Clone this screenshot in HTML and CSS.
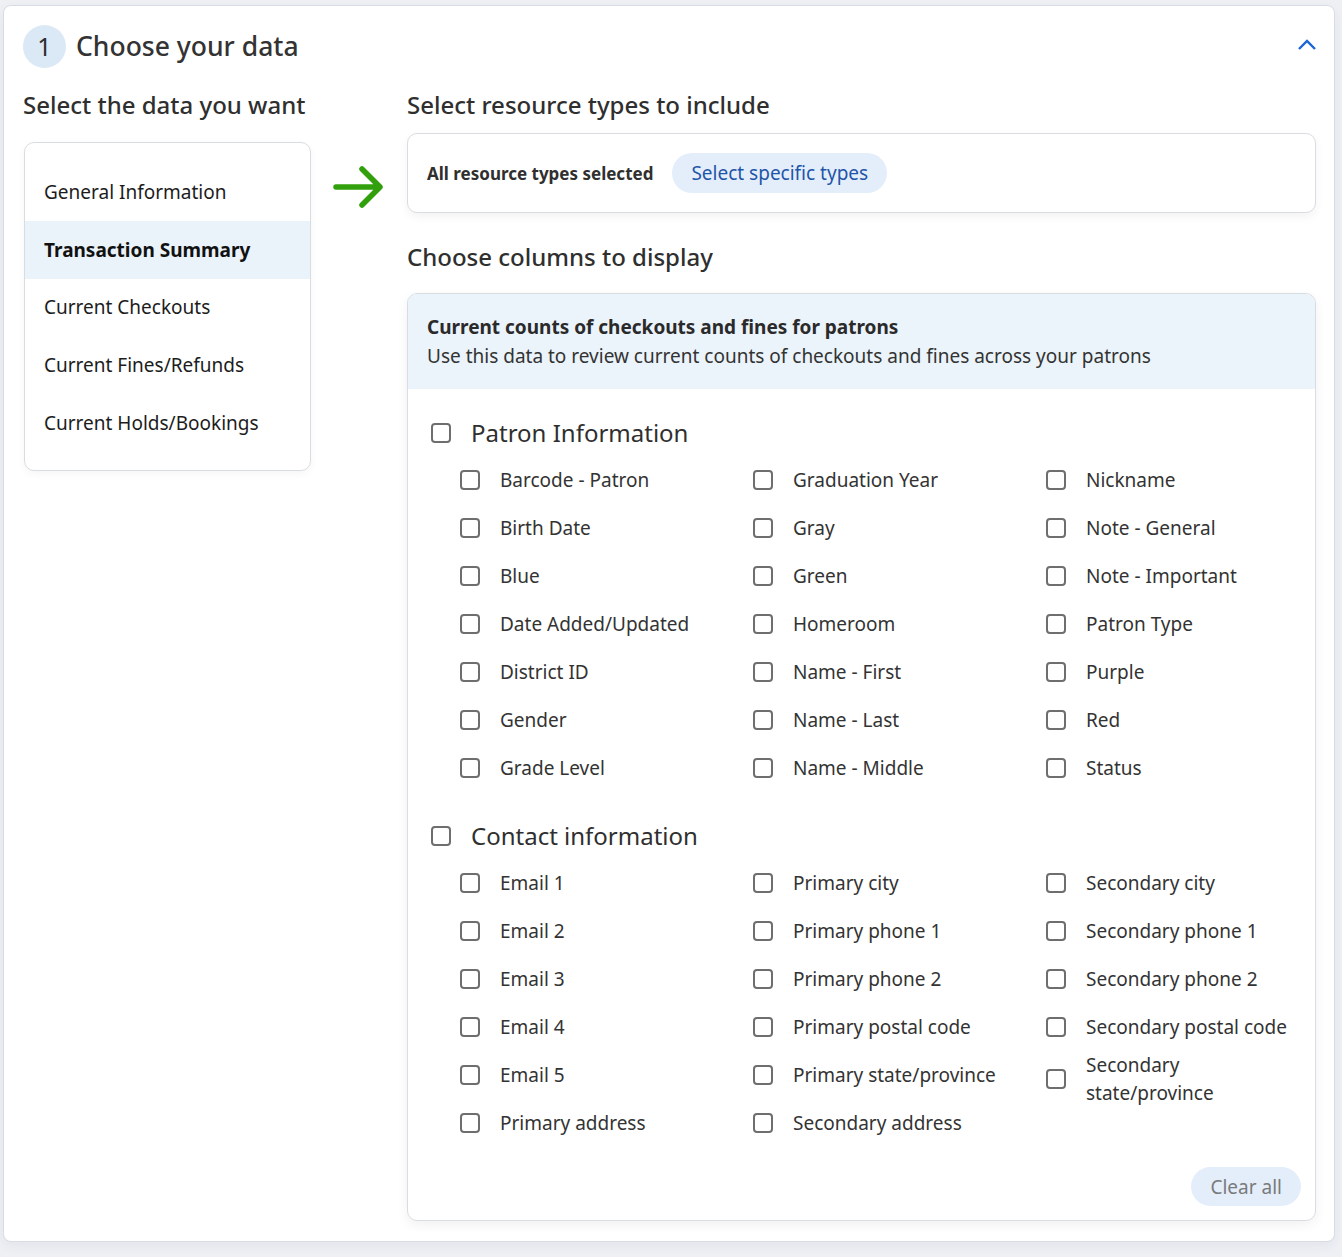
FILE: index.html
```html
<!DOCTYPE html>
<html lang="en">
<head>
    <meta charset="UTF-8">
    <meta name="viewport" content="width=device-width, initial-scale=1.0">
    <title>Report builder</title>
    <link rel="stylesheet" href="styles.css">
</head>
<body>
    <div class="step-card">
        <!-- Step header -->
        <div class="step-header">
            <span class="step-number">1</span>
            <h1 class="step-title">Choose your data</h1>
            <button class="collapse-btn" aria-label="Collapse">
                <svg width="20" height="12" viewBox="0 0 20 12"><path d="M2 10 L10 2 L18 10" fill="none" stroke="#1a66d9" stroke-width="2.4"/></svg>
            </button>
        </div>

        <div class="step-body">
            <!-- Left column: data sets -->
            <div class="data-col">
                <h2 class="section-title">Select the data you want</h2>
                <ul class="data-list">
                    <li>General Information</li>
                    <li class="active">Transaction Summary</li>
                    <li>Current Checkouts</li>
                    <li>Current Fines/Refunds</li>
                    <li>Current Holds/Bookings</li>
                </ul>
            </div>

            <div class="arrow-col">
                <svg width="54" height="46" viewBox="0 0 54 46"><path d="M4 23 H47 M30 5 L48 23 L30 41" fill="none" stroke="#32a00c" stroke-width="5.5" stroke-linecap="round" stroke-linejoin="round"/></svg>
            </div>

            <!-- Right column: options -->
            <div class="options-col">
                <h2 class="section-title">Select resource types to include</h2>
                <div class="resource-card">
                    <span class="resource-label">All resource types selected</span>
                    <button class="pill-btn">Select specific types</button>
                </div>

                <h2 class="section-title columns-title">Choose columns to display</h2>
                <div class="columns-card">
                    <div class="columns-head">
                        <div class="columns-head-title">Current counts of checkouts and fines for patrons</div>
                        <div class="columns-head-desc">Use this data to review current counts of checkouts and fines across your patrons</div>
                    </div>

                    <div class="columns-body">
                        <div class="group">
                            <label class="group-title"><span class="box"></span>Patron Information</label>
                            <div class="group-grid">
                                <div class="group-col">
                                    <label class="item"><span class="box"></span>Barcode - Patron</label>
                                    <label class="item"><span class="box"></span>Birth Date</label>
                                    <label class="item"><span class="box"></span>Blue</label>
                                    <label class="item"><span class="box"></span>Date Added/Updated</label>
                                    <label class="item"><span class="box"></span>District ID</label>
                                    <label class="item"><span class="box"></span>Gender</label>
                                    <label class="item"><span class="box"></span>Grade Level</label>
                                </div>
                                <div class="group-col">
                                    <label class="item"><span class="box"></span>Graduation Year</label>
                                    <label class="item"><span class="box"></span>Gray</label>
                                    <label class="item"><span class="box"></span>Green</label>
                                    <label class="item"><span class="box"></span>Homeroom</label>
                                    <label class="item"><span class="box"></span>Name - First</label>
                                    <label class="item"><span class="box"></span>Name - Last</label>
                                    <label class="item"><span class="box"></span>Name - Middle</label>
                                </div>
                                <div class="group-col">
                                    <label class="item"><span class="box"></span>Nickname</label>
                                    <label class="item"><span class="box"></span>Note - General</label>
                                    <label class="item"><span class="box"></span>Note - Important</label>
                                    <label class="item"><span class="box"></span>Patron Type</label>
                                    <label class="item"><span class="box"></span>Purple</label>
                                    <label class="item"><span class="box"></span>Red</label>
                                    <label class="item"><span class="box"></span>Status</label>
                                </div>
                            </div>
                        </div>

                        <div class="group">
                            <label class="group-title"><span class="box"></span>Contact information</label>
                            <div class="group-grid">
                                <div class="group-col">
                                    <label class="item"><span class="box"></span>Email 1</label>
                                    <label class="item"><span class="box"></span>Email 2</label>
                                    <label class="item"><span class="box"></span>Email 3</label>
                                    <label class="item"><span class="box"></span>Email 4</label>
                                    <label class="item"><span class="box"></span>Email 5</label>
                                    <label class="item"><span class="box"></span>Primary address</label>
                                </div>
                                <div class="group-col">
                                    <label class="item"><span class="box"></span>Primary city</label>
                                    <label class="item"><span class="box"></span>Primary phone 1</label>
                                    <label class="item"><span class="box"></span>Primary phone 2</label>
                                    <label class="item"><span class="box"></span>Primary postal code</label>
                                    <label class="item"><span class="box"></span>Primary state/province</label>
                                    <label class="item"><span class="box"></span>Secondary address</label>
                                </div>
                                <div class="group-col">
                                    <label class="item"><span class="box"></span>Secondary city</label>
                                    <label class="item"><span class="box"></span>Secondary phone 1</label>
                                    <label class="item"><span class="box"></span>Secondary phone 2</label>
                                    <label class="item"><span class="box"></span>Secondary postal code</label>
                                    <label class="item"><span class="box"></span>Secondary state/province</label>
                                </div>
                            </div>
                        </div>

                        <div class="columns-foot">
                            <button class="pill-btn clear-btn">Clear all</button>
                        </div>
                    </div>
                </div>
            </div>
        </div>
    </div>
</body>
</html>
```

FILE: styles.css
```css
body {
    margin: 0;
    padding: 5px 7px 15px 3px;
    background: #eef0f4;
    font-family: "Noto Sans", "Open Sans", sans-serif;
    color: #2f2f2f;
}
h1, h2 {
    margin: 0;
    font-weight: 500;
}
button {
    font-family: inherit;
    border: none;
    cursor: pointer;
}
.step-card {
    background: #fff;
    border: 1px solid #d8dde5;
    border-radius: 8px;
    box-shadow: 0 4px 12px rgba(30, 50, 80, 0.06);
    padding: 19px 18px 20px 19px;
}
.step-header {
    display: flex;
    align-items: center;
    height: 42px;
}
.step-number {
    width: 43px;
    height: 43px;
    border-radius: 50%;
    background: #dbe8f6;
    display: flex;
    align-items: center;
    justify-content: center;
    font-size: 25px;
    color: #2f2f2f;
    margin-right: 10px;
}
.step-title {
    font-size: 26.5px;
    flex: 1;
    color: #333;
}
.collapse-btn {
    background: none;
    padding: 0;
    width: 22px;
    height: 22px;
    display: flex;
    align-items: center;
    justify-content: center;
    margin: 0 -2px 2px 0;
}
.step-body {
    display: flex;
    margin-top: 23px;
}
.data-col {
    width: 288px;
    flex-shrink: 0;
}
.section-title {
    font-size: 24px;
    line-height: 30px;
    color: #2f2f2f;
}
.data-list {
    list-style: none;
    margin: 22px 0 0 1px;
    padding: 20px 0 18px;
    border: 1px solid #d9dce1;
    border-radius: 10px;
    box-shadow: 0 3px 8px rgba(0, 0, 0, 0.04);
}
.data-list li {
    height: 57.75px;
    display: flex;
    align-items: center;
    padding-left: 19px;
    font-size: 19px;
    color: #1c1c1c;
}
.data-list li.active {
    background: #eaf2fa;
    font-weight: 700;
    color: #111;
}
.arrow-col {
    width: 96px;
    flex-shrink: 0;
    padding-top: 74px;
    padding-left: 21px;
    box-sizing: border-box;
}
.options-col {
    flex: 1;
    min-width: 0;
}
.resource-card {
    margin-top: 13px;
    height: 80px;
    box-sizing: border-box;
    border: 1px solid #d9dce1;
    border-radius: 10px;
    box-shadow: 0 4px 10px rgba(0, 0, 0, 0.05);
    display: flex;
    align-items: center;
    padding: 0 19px;
    gap: 19px;
}
.resource-label {
    font-size: 17px;
    font-weight: 700;
    color: #2f2f2f;
}
.pill-btn {
    background: #e4eefb;
    color: #1f55a8;
    font-size: 19px;
    height: 40px;
    padding: 0 19px;
    border-radius: 20px;
}
.columns-title {
    margin-top: 29px;
}
.columns-card {
    margin-top: 21px;
    border: 1px solid #d9dce1;
    border-radius: 10px;
    box-shadow: 0 4px 12px rgba(0, 0, 0, 0.06);
    overflow: hidden;
}
.columns-head {
    background: #ebf3fb;
    padding: 19px 19px 18px;
    font-size: 19px;
    line-height: 29px;
}
.columns-head-title {
    font-weight: 700;
    color: #2a2a2a;
}
.columns-head-desc {
    color: #333;
}
.columns-body {
    padding: 28px 14px 14px 23px;
}
.group + .group {
    margin-top: 28px;
}
.group-title {
    display: flex;
    align-items: center;
    gap: 20px;
    font-size: 24px;
    line-height: 32px;
    color: #2f2f2f;
}
.group-grid {
    display: grid;
    grid-template-columns: repeat(3, 1fr);
    column-gap: 30px;
    margin: 7px -8px 0 29px;
}
.group-col {
    display: flex;
    flex-direction: column;
}
.item {
    min-height: 48px;
    display: flex;
    align-items: center;
    gap: 20px;
    font-size: 19px;
    line-height: 28px;
    color: #333;
}
.box {
    width: 20px;
    height: 20px;
    box-sizing: border-box;
    border: 2px solid #6e6e6e;
    border-radius: 4px;
    flex-shrink: 0;
}
.columns-foot {
    display: flex;
    justify-content: flex-end;
    margin-top: 20px;
}
.clear-btn {
    height: 39px;
    padding: 0 19px;
    color: #7a7a7a;
}
```
